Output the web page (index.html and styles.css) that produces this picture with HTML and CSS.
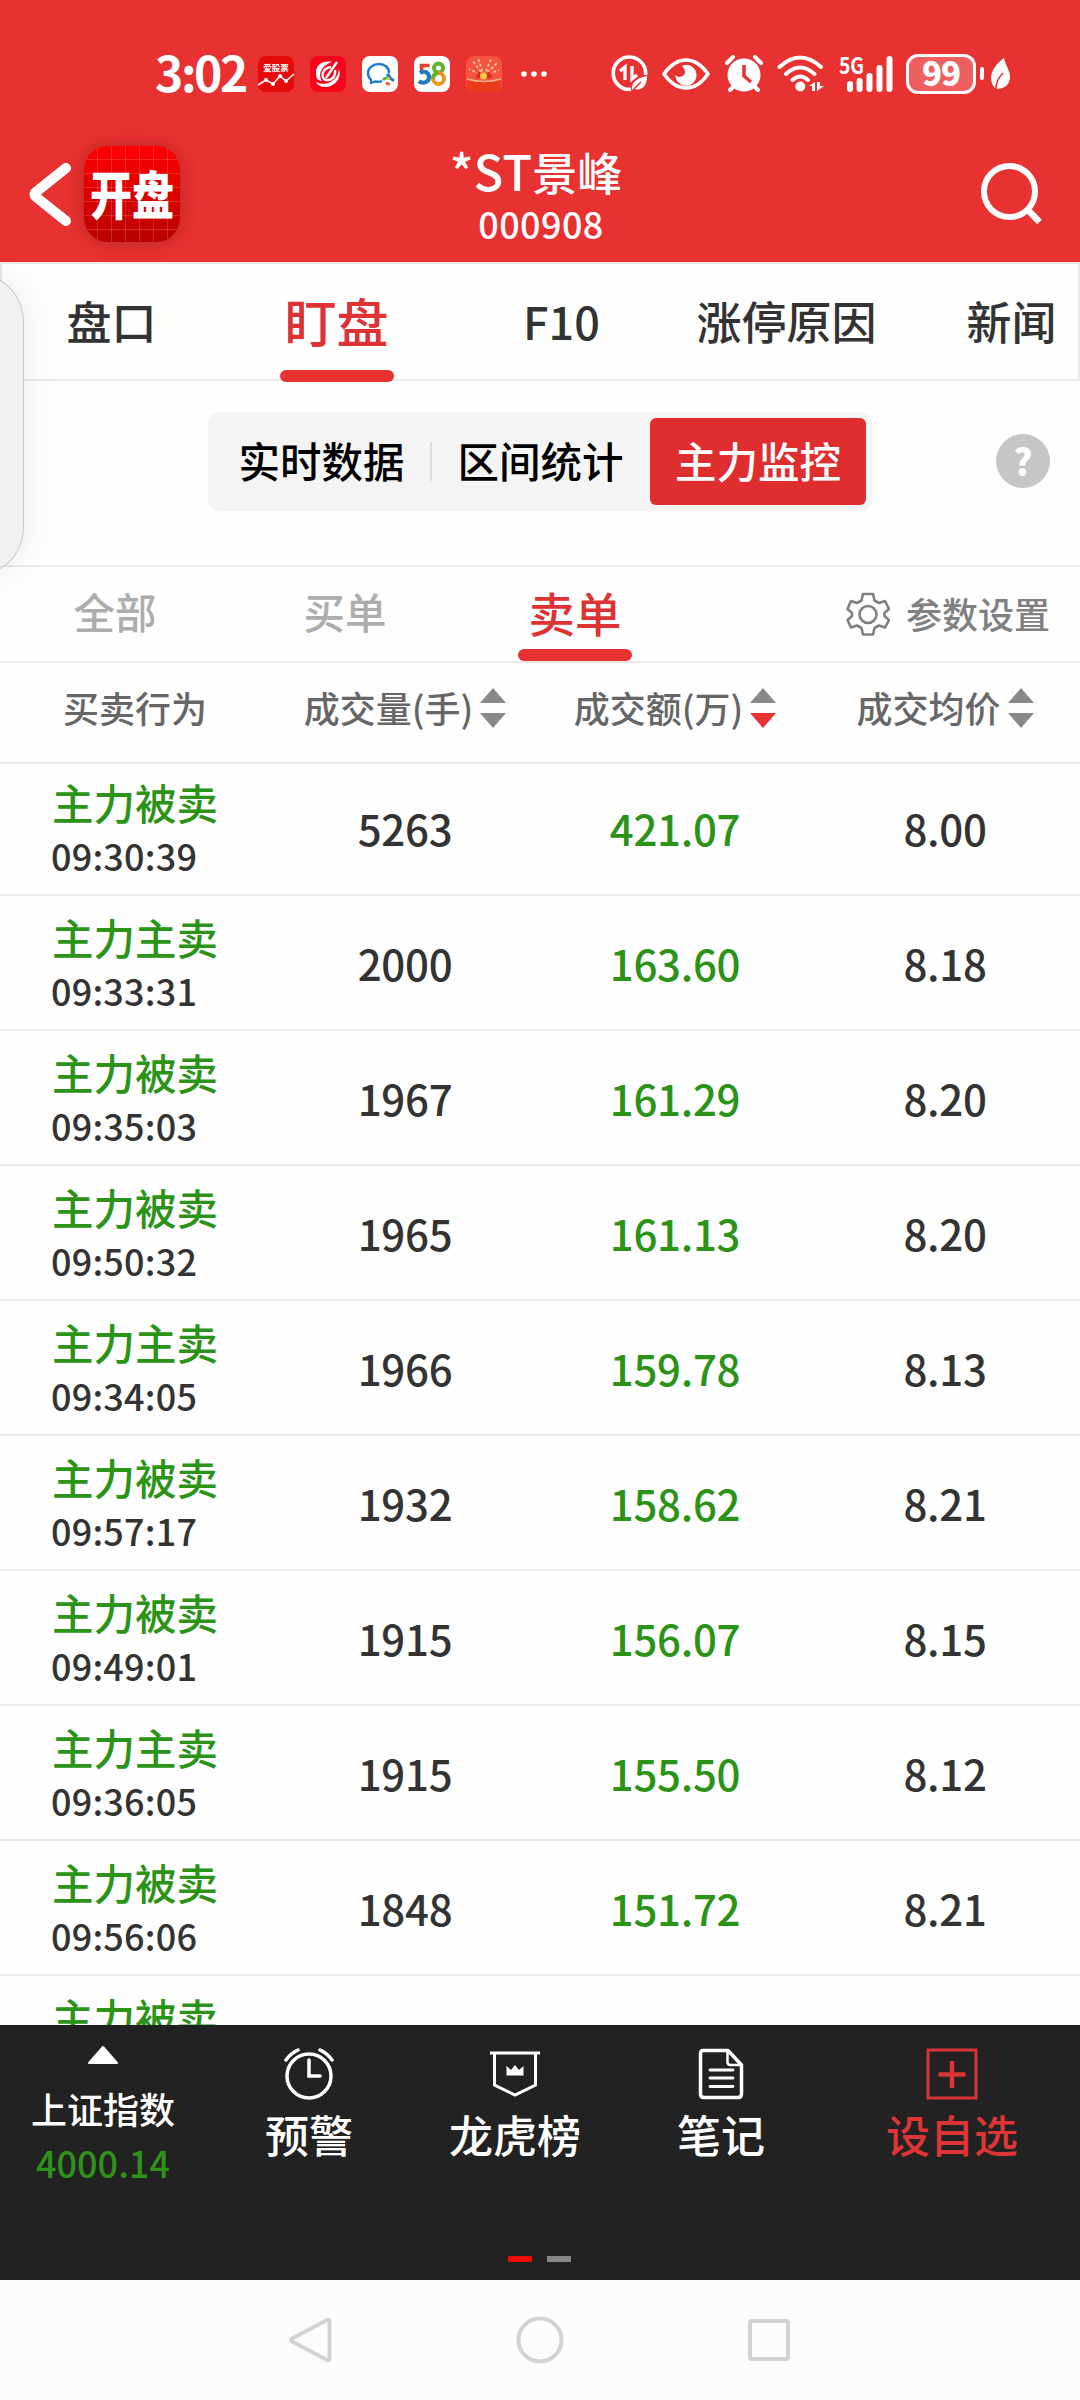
FILE: index.html
```html
<!DOCTYPE html>
<html lang="zh-CN">
<head>
    <meta charset="UTF-8">
    <meta name="viewport" content="width=device-width, initial-scale=1.0">
    <title>*ST景峰 000908</title>
    <link rel="stylesheet" href="styles.css">
</head>
<body>

    <header class="header">
        <div class="status-bar">
            <div class="status-left">
                <span class="clock">3:02</span>
                <svg class="app" viewBox="0 0 36 36">
                    <rect width="36" height="36" rx="8" fill="#e60a0a"/>
                    <text class="app-text" x="18" y="15" text-anchor="middle" font-size="8.500" fill="#fff">爱股票</text>
                    <path d="M0 29L8 24L15 28L22 20L28 25L36 18" fill="none" stroke="#fff" stroke-width="1.6"/>
                    <g fill="#fff"><circle cx="8" cy="24" r="2"/><circle cx="15" cy="28" r="2"/><circle cx="22" cy="20" r="2"/><circle cx="28" cy="25" r="2"/></g>
                </svg>
                <svg class="app" viewBox="0 0 36 36">
                    <rect width="36" height="36" rx="8" fill="#f5051c"/>
                    <path d="M22 6C12 4 5 10 6 18C6 23 9 25 12 25C7 17 13 9 22 6Z" fill="#fff"/>
                    <path d="M29 13C32 23 24 32 13 31C9 30 7 28 6 26C16 31 28 25 29 13Z" fill="#fff"/>
                    <path d="M27 6L16 22M21 11C12 12 10 22 16 24C22 25 26 20 25 14" fill="none" stroke="#fff" stroke-width="2.4"/>
                </svg>
                <svg class="app" viewBox="0 0 36 36">
                    <rect width="36" height="36" rx="8" fill="#fff"/>
                    <path d="M27 17C27 11 22 8 17 8C11 8 6 12 6 17C6 20 7 22 9 24L9 27L13 25.500C16 26 18 26 20 25" fill="none" stroke="#1d7ad0" stroke-width="2.400" stroke-linejoin="round"/>
                    <path d="M26 19L28 22" stroke="#1d7ad0" stroke-width="3.5" stroke-linecap="round"/>
                    <path d="M29 23L31 24" stroke="#1d7ad0" stroke-width="3" stroke-linecap="round"/>
                    <path d="M22 23L24 22" stroke="#4fb044" stroke-width="3" stroke-linecap="round"/>
                    <path d="M25 27.500L27 28" stroke="#ef6a36" stroke-width="3" stroke-linecap="round"/>
                    <circle cx="26.500" cy="22.500" r="1.500" fill="#f8c22b"/>
                </svg>
                <svg class="app" viewBox="0 0 36 36">
                    <rect width="36" height="36" rx="8" fill="#fff"/>
                    <path d="M15.500 9.500H7.500V16" fill="none" stroke="#e4402c" stroke-width="3.600"/>
                    <path d="M6 17C11 14 15 17 15 21C15 27 8 28 5 25" fill="none" stroke="#2279bd" stroke-width="4"/>
                    <circle cx="24.500" cy="12" r="4.500" fill="none" stroke="#5eb331" stroke-width="4"/>
                    <circle cx="24.500" cy="22.500" r="5.500" fill="none" stroke="#ee9420" stroke-width="4"/>
                    <path d="M19 22.500A5.500 5.500 0 0 1 24 17" fill="none" stroke="#5eb331" stroke-width="4"/>
                </svg>
                <svg class="app" viewBox="0 0 36 36">
                    <rect width="36" height="36" rx="8" fill="#f4543f"/>
                    <path d="M18 20L6 4M18 20L12 2M18 20L25 3M18 20L32 6M18 20L3 13M18 20L33 14" stroke="#ffc29a" stroke-width="1.800" stroke-dasharray="3 2"/>
                    <path d="M10 22L12 15L18 19L24 15L26 22Z" fill="#d0301f"/>
                    <circle cx="17.500" cy="20" r="3.500" fill="#ffc548"/>
                    <path d="M1 23Q18 28 35 23V28Q35 36 28 36H8Q1 36 1 28Z" fill="#ea3a1c"/>
                    <path d="M1 23Q18 28 35 23" fill="none" stroke="#ffb183" stroke-width="1.500"/>
                </svg>
                <svg class="dots" viewBox="0 0 26 6"><g fill="#fff"><circle cx="3" cy="3" r="2.800"/><circle cx="13" cy="3" r="2.800"/><circle cx="23" cy="3" r="2.800"/></g></svg>
            </div>
            <div class="status-right">
                <svg width="37" height="37" viewBox="0 0 37 37" fill="none" stroke="#fff">
                    <path d="M20 34.300A16.200 16.200 0 1 1 34.500 20" stroke-width="3.600"/>
                    <path d="M9 16L14 12V25M21 11V24L26 20" stroke-width="3.300"/>
                    <path d="M21 35C20 28 25 23 36 21C36 31 31 36 23 34Z" fill="#fff" stroke="none"/>
                    <path d="M22 35L30 27" stroke="#e83131" stroke-width="1.500"/>
                </svg>
                <svg class="ml-eye" width="48" height="32" viewBox="0 0 48 32">
                    <path d="M2 16C10 4.500 17 2 24 2S38 4.500 46 16C38 27.500 31 30 24 30S10 27.500 2 16Z" fill="none" stroke="#fff" stroke-width="3.600" stroke-linejoin="round"/>
                    <path d="M22 7A10.500 10.500 0 1 1 13.500 17C17 21 23 18 23 14C23 11 21 9 20 8Z" fill="#fff"/>
                </svg>
                <svg class="ml-alarm" width="38" height="37" viewBox="0 0 38 37">
                    <circle cx="19" cy="20" r="16.500" fill="#fff"/>
                    <path d="M2 8L8 2M36 8L30 2M9 31L5 35M29 31L33 35" stroke="#fff" stroke-width="4" stroke-linecap="round"/>
                    <path d="M19 10V21L26 27" fill="none" stroke="#e83131" stroke-width="3.500"/>
                </svg>
                <svg class="ml-wifi" width="48" height="37" viewBox="0 0 48 37">
                    <path d="M2.500 12Q23 -7 44 12M9 19Q23 6 37.500 19M15.500 25Q23 18 31 25" fill="none" stroke="#fff" stroke-width="4" stroke-linecap="round"/>
                    <circle cx="23.300" cy="31.500" r="5" fill="#fff"/>
                    <path d="M32 31L38 27V36H35V31ZM40 27V36L47 31H43V27Z" fill="#fff"/>
                </svg>
                <svg class="ml-signal" width="54" height="38" viewBox="0 0 54 38">
                    <text class="net" x="0" y="19" font-size="23" textLength="25" lengthAdjust="spacingAndGlyphs" fill="#fff">5G</text>
                    <path d="M11 29V34M20.600 26V34M30.500 21V34M40.500 13V34M50.500 4V34" stroke="#fff" stroke-width="6" stroke-linecap="round"/>
                </svg>
                <div class="battery">99</div>
                <div class="battery-tip"></div>
                <svg class="ml-leaf" width="20" height="32" viewBox="0 0 20 32">
                    <path d="M14 0C16 9 20 12 20 19C20 27 14 31 6 31C-2 24 -1 11 14 0Z" fill="#fff"/>
                    <path d="M6 31C6 24 9 19 13 15" fill="none" stroke="#e83131" stroke-width="1.600"/>
                </svg>
            </div>
        </div>

        <div class="title-bar">
            <div class="title-left">
                <svg class="back" viewBox="0 0 42 63"><path d="M37 5L7 29Q4 31.500 7 34L37 58" fill="none" stroke="#fff" stroke-width="10" stroke-linecap="round" stroke-linejoin="round"/></svg>
                <div class="logo"><span>开盘</span></div>
            </div>
            <div class="title">
                <h1><span>*ST</span>景峰</h1>
                <p>000908</p>
            </div>
            <svg class="search" viewBox="0 0 62 62"><circle cx="28.500" cy="28.500" r="25.500" fill="none" stroke="#fff" stroke-width="6"/><path d="M46 46L58.500 59" stroke="#fff" stroke-width="6.500"/></svg>
        </div>
    </header>

    <nav class="tabs">
        <a>盘口</a>
        <a class="active">盯盘</a>
        <a>F10</a>
        <a>涨停原因</a>
        <a>新闻</a>
    </nav>

    <div class="mode">
        <div class="segment">
            <span>实时数据</span>
            <i></i>
            <span>区间统计</span>
            <span class="active">主力监控</span>
        </div>
        <div class="help">?</div>
    </div>

    <div class="filter">
        <a>全部</a>
        <a>买单</a>
        <a class="active">卖单</a>
        <div class="settings">
            <svg width="44" height="44" viewBox="0 0 44 44" fill="none" stroke="#808080" stroke-width="2.600" stroke-linejoin="round">
                <path d="M17 2H27L28.500 8.500L33 11L39 9L43 17L38.500 21V24L43 28L39 35.500L33 33.500L28.500 36L27 42.500H17L15.500 36L11 33.500L5 35.500L1.500 28L6 24V21L1.500 17L5 9L11 11L15.500 8.500Z"/>
                <circle cx="22" cy="22.500" r="8.500"/>
            </svg>
            <span>参数设置</span>
        </div>
    </div>

    <div class="thead">
        <div>买卖行为</div>
        <div>成交量(手)<svg class="sort" viewBox="0 0 26 40"><path d="M13 0L26 15H0Z"/><path d="M0 25H26L13 40Z"/></svg></div>
        <div>成交额(万)<svg class="sort" viewBox="0 0 26 40"><path d="M13 0L26 15H0Z"/><path class="on" d="M0 25H26L13 40Z"/></svg></div>
        <div>成交均价<svg class="sort" viewBox="0 0 26 40"><path d="M13 0L26 15H0Z"/><path d="M0 25H26L13 40Z"/></svg></div>
    </div>

    <main class="list">
        <div class="row"><div class="act"><b>主力被卖</b><time>09:30:39</time></div><div>5263</div><div class="green">421.07</div><div>8.00</div></div>
        <div class="row"><div class="act"><b>主力主卖</b><time>09:33:31</time></div><div>2000</div><div class="green">163.60</div><div>8.18</div></div>
        <div class="row"><div class="act"><b>主力被卖</b><time>09:35:03</time></div><div>1967</div><div class="green">161.29</div><div>8.20</div></div>
        <div class="row"><div class="act"><b>主力被卖</b><time>09:50:32</time></div><div>1965</div><div class="green">161.13</div><div>8.20</div></div>
        <div class="row"><div class="act"><b>主力主卖</b><time>09:34:05</time></div><div>1966</div><div class="green">159.78</div><div>8.13</div></div>
        <div class="row"><div class="act"><b>主力被卖</b><time>09:57:17</time></div><div>1932</div><div class="green">158.62</div><div>8.21</div></div>
        <div class="row"><div class="act"><b>主力被卖</b><time>09:49:01</time></div><div>1915</div><div class="green">156.07</div><div>8.15</div></div>
        <div class="row"><div class="act"><b>主力主卖</b><time>09:36:05</time></div><div>1915</div><div class="green">155.50</div><div>8.12</div></div>
        <div class="row"><div class="act"><b>主力被卖</b><time>09:56:06</time></div><div>1848</div><div class="green">151.72</div><div>8.21</div></div>
        <div class="row"><div class="act"><b>主力被卖</b></div></div>
    </main>

    <footer class="toolbar">
        <div class="tools">
            <div class="index">
                <svg width="30" height="18" viewBox="0 0 30 18"><path d="M15 1L29 17H1Z" fill="#fff" stroke="#fff" stroke-width="2" stroke-linejoin="round"/></svg>
                <span>上证指数</span>
                <em>4000.14</em>
            </div>
            <div class="tool">
                <svg viewBox="0 0 52 52" fill="none" stroke="#fff" stroke-width="3.500" stroke-linecap="round">
                    <circle cx="26" cy="28" r="22"/>
                    <path d="M26 12V28H37M3 12Q8 5 15 2M49 12Q44 5 37 2"/>
                </svg>
                <span>预警</span>
            </div>
            <div class="tool">
                <svg viewBox="0 0 52 52" fill="none" stroke="#fff" stroke-width="3">
                    <path d="M1 5H51M5.500 5V37L26 47L46.500 37V5"/>
                    <path d="M17.500 27.500V18L22 22L26 17L30 22L34.500 18V27.500Z" fill="#fff" stroke="none"/>
                </svg>
                <span>龙虎榜</span>
            </div>
            <div class="tool">
                <svg viewBox="0 0 52 52" fill="none" stroke="#fff" stroke-width="3.500" stroke-linejoin="round" stroke-linecap="round">
                    <path d="M8 2.500H33L46.500 17V46Q46.500 49.500 43 49.500H9Q5.500 49.500 5.500 46V6Q5.500 2.500 8 2.500Z"/>
                    <path d="M32.500 3V14Q32.500 17 35.500 17H46" stroke-width="2.500"/>
                    <path d="M15 22H38M15 30H38M15 38.500H38" stroke-width="2.800"/>
                </svg>
                <span>笔记</span>
            </div>
            <div class="tool add">
                <svg viewBox="0 0 52 52" fill="none" stroke="#d93536" stroke-width="3">
                    <rect x="2" y="2" width="48" height="48"/>
                    <path d="M12.500 26.500H39.500M26 13V40" stroke-width="4.500"/>
                </svg>
                <span>设自选</span>
            </div>
        </div>
        <div class="pager"><i class="active"></i><i></i></div>
    </footer>

    <div class="sys-nav">
        <svg viewBox="0 0 48 48"><path d="M42.500 5V43Q42 45 40 44L5 25.500Q3 24 5 22.500L40 4Q42 3 42.500 5Z"/></svg>
        <svg viewBox="0 0 48 48"><circle cx="24" cy="24" r="21.500"/></svg>
        <svg viewBox="0 0 48 48"><rect x="5" y="5" width="38" height="38" rx="2"/></svg>
    </div>

    <!-- floating drawer handle -->
    <div class="handle"></div>

</body>
</html>
```
FILE: styles.css
```css
* { box-sizing: border-box; }
body {
    font-family: "Noto Sans CJK SC", sans-serif;
    font-weight: 500;
    margin: 0;
    width: 1080px;
    height: 2400px;
    overflow: hidden;
    position: relative;
    background: #fefefe;
    color: #333;
}
h1, p { margin: 0; font-weight: 500; }
b { font-weight: 500; }
svg { display: block; flex: none; }

/* header */
.header { height: 262px; background: #e83131; color: #fff; }
.status-bar { height: 110px; padding: 0 70px 0 155px; display: flex; justify-content: space-between; }
.status-left, .status-right { display: flex; align-items: center; height: 147px; }
.clock { width: 92px; margin-right: 11px; padding-bottom: 5px; font-size: 48px; font-weight: 700; line-height: 50px; letter-spacing: -2.4px; white-space: nowrap; }
.app { width: 36px; height: 36px; margin-right: 16px; }
.app-text, .net { font-family: "Noto Sans CJK SC", sans-serif; font-weight: 700; }
.dots { width: 26px; height: 6px; margin-left: 3px; }
.ml-eye { margin-left: 14px; }
.ml-alarm { margin-left: 15px; }
.ml-wifi { margin-left: 14px; }
.ml-signal { margin-left: 14px; }
.battery {
    width: 70px;
    height: 40px;
    margin-left: 13px;
    border: 3px solid #fff;
    border-radius: 12px;
    background: #ee6060;
    font-size: 33px;
    font-weight: 900;
    line-height: 31px;
    letter-spacing: -1px;
    text-align: center;
}
.battery-tip { width: 4px; height: 13px; margin-left: 4px; border-radius: 2px; background: #fff; }
.ml-leaf { margin-left: 6px; }

.title-bar { height: 152px; padding: 0 37px 0 29px; display: grid; grid-template-columns: 1fr auto 1fr; }
.title-left { display: flex; align-items: flex-start; padding-top: 36px; }
.back { width: 42px; height: 63px; margin-top: 17px; }
.logo {
    width: 96px;
    height: 96px;
    margin-left: 13px;
    padding-bottom: 5px;
    border-radius: 24px;
    display: flex;
    align-items: center;
    justify-content: center;
    background:
        repeating-linear-gradient(90deg, transparent 0 13px, rgba(255,255,255,.16) 13px 14px),
        repeating-linear-gradient(transparent 0 13px, rgba(255,255,255,.16) 13px 14px),
        linear-gradient(#ff0000, #b90000);
    box-shadow: 0 0 16px rgba(90, 20, 20, .35);
}
.logo span { font-size: 42px; font-weight: 900; line-height: 50px; transform: scaleY(1.25); }
.title { text-align: center; padding-top: 30px; }
.title h1 { font-size: 45px; line-height: 60px; height: 60px; }
.title h1 span { font-size: 49px; }
.title p { padding-left: 10px; font-size: 36px; line-height: 46px; letter-spacing: .4px; }
.search { width: 62px; height: 62px; margin-top: 53px; justify-self: end; }

/* tabs */
.tabs { height: 119px; display: flex; border: 2px solid #e9e9e9; }
.tabs a {
    flex: 0 0 225px;
    height: 119px;
    display: flex;
    flex-direction: column;
    align-items: center;
    font-size: 45px;
    line-height: 113px;
}
.tabs a:first-child { margin-left: -3px; }
.tabs .active { color: #dd3334; font-size: 52px; }
.tabs .active::after { content: ""; width: 114px; height: 12px; margin-top: -7px; border-radius: 6px; background: #e83131; flex: none; }

.mode { height: 184px; padding: 31px 30px 0 208px; display: flex; justify-content: space-between; }
.segment {
    width: 664px;
    height: 99px;
    padding: 6px 6px 6px 5px;
    border-radius: 11px;
    background: #f4f4f4;
    color: #000;
    display: flex;
    align-items: center;
    font-size: 41.5px;
}
.segment span { width: 217px; height: 87px; line-height: 85px; text-align: center; }
.segment i { width: 2px; height: 39px; background: #dcdcdc; }
.segment .active { width: 216px; margin-left: 1px; background: #df2e2f; color: #fff; border-radius: 6px; }
.help { width: 54px; height: 54px; margin-top: 22px; border-radius: 50%; background: #c6c6c6; color: #fff; font-size: 36px; font-weight: 900; line-height: 52px; text-align: center; }

/* buy / sell filter */
.filter { height: 98px; display: flex; border-top: 2px solid #e9e9e9; border-bottom: 2px solid #e9e9e9; color: #adadad; }
.filter a {
    width: 230px;
    height: 94px;
    display: flex;
    flex-direction: column;
    align-items: center;
    font-size: 41.5px;
    line-height: 89px;
}
.filter .active { color: #dd3334; font-size: 46.5px; }
.filter .active::after { content: ""; width: 114px; height: 12px; margin-top: -7px; border-radius: 6px; background: #e83131; flex: none; }
.settings { margin-left: auto; padding-right: 30px; display: flex; align-items: center; gap: 16px; font-size: 36px; color: #808080; }
.settings span { padding-bottom: 3px; }

.thead, .row { display: grid; grid-template-columns: repeat(4, 270px); align-items: center; }
.thead { height: 101px; border-bottom: 2px solid #e9e9e9; font-size: 36px; line-height: 50px; color: #666; }
.thead div { display: flex; align-items: center; justify-content: center; margin-top: -12px; }
.sort { width: 26px; height: 40px; margin-left: 7px; margin-top: 2px; fill: #888; }
.sort .on { fill: #e83131; }

.list { height: 1261px; overflow: hidden; }
.row { height: 135px; border-bottom: 2px solid #e9e9e9; text-align: center; font-size: 42px; letter-spacing: -.3px; }
.row:first-child { margin-top: -3px; }
.act { padding-left: 52px; text-align: left; height: 133px; }
.act b { display: block; height: 44px; margin-top: 19px; font-size: 41.5px; line-height: 44px; letter-spacing: 0; color: #2b9318; }
.act time { display: block; margin-top: 9px; margin-left: -1px; font-size: 36px; line-height: 44px; letter-spacing: .2px; }
.green { color: #2b9318; }

/* bottom toolbar */
.toolbar { height: 255px; background: #222; color: #fff; display: flex; flex-direction: column; justify-content: space-between; }
.tools { display: grid; grid-template-columns: 206px 206px 206px 206px 1fr; }
.index { padding-top: 21px; display: flex; flex-direction: column; align-items: center; font-size: 36px; }
.index span { line-height: 44px; margin-top: 22px; }
.index em { line-height: 44px; margin-top: 10px; font-style: normal; color: #2f931b; }
.tool { padding-top: 23px; display: flex; flex-direction: column; align-items: center; font-size: 44px; }
.tool svg { width: 52px; height: 52px; }
.tool span { line-height: 50px; margin-top: 9px; }
.add { color: #dd3637; }
.pager { display: flex; justify-content: center; gap: 15px; height: 24px; padding-right: 1px; }
.pager i { width: 24px; height: 6px; background: #888; }
.pager .active { background: #ee0a0a; }

.sys-nav { height: 120px; background: #fcfcfc; display: flex; justify-content: center; align-items: center; gap: 181px; }
.sys-nav svg { width: 48px; height: 48px; fill: none; stroke: #d2d2d2; stroke-width: 4; }

.handle {
    position: absolute;
    left: -56px;
    top: 276px;
    width: 80px;
    height: 297px;
    border: 1px solid #c8c8c8;
    border-radius: 40px / 46px;
    background: #f0f0f0;
    box-shadow: 0 0 36px rgba(0, 0, 0, .08);
}
```
